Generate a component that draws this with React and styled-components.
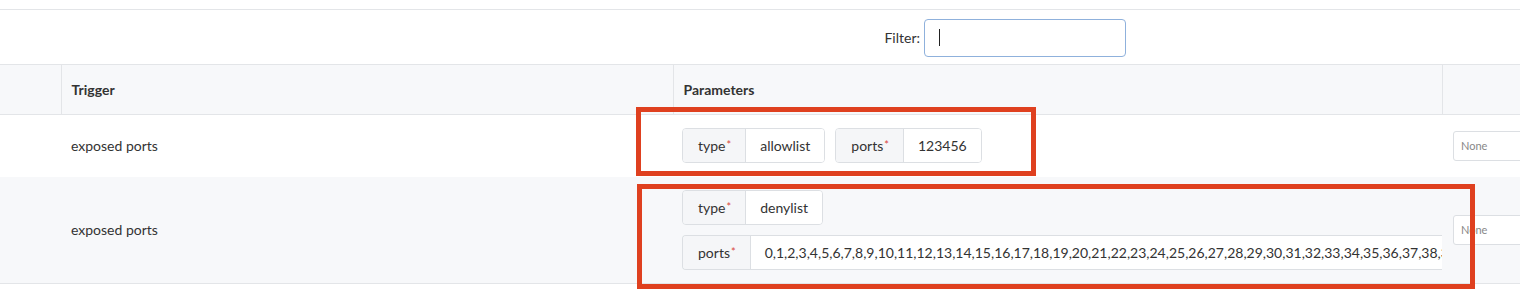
import React from 'react'
import styled, { createGlobalStyle } from 'styled-components'

const GlobalStyle = createGlobalStyle`
  body {
    margin: 0;
    background: #fff;
    font-family: Lato, "Noto Sans", "Liberation Sans", sans-serif;
    color: #333;
  }
`;

const Page = styled.div`
  position: relative;
  width: 1520px;
  height: 296px;
  overflow: hidden;
  background: #fff;
`;

const TopEdge = styled.div`
  height: 9px;
  border-bottom: 1px solid #e3e5e8;
`;

const FilterBar = styled.div`
  height: 54px;
  display: flex;
  align-items: center;
  justify-content: flex-end;
  padding-right: 394px;
  gap: 4px;
  border-bottom: 1px solid #e3e5e8;
  font-size: 14px;
  color: #333;
`;

const FilterInput = styled.div`
  width: 202px;
  height: 38px;
  margin-top: 1px;
  border: 1px solid #8fb1dc;
  border-radius: 4px;
  background: #fff;
  display: flex;
  align-items: center;
  padding-left: 14px;
  box-sizing: border-box;
`;

const Caret = styled.span`
  width: 1px;
  height: 17px;
  background: #222;
`;

const Table = styled.table`
  border-collapse: collapse;
  table-layout: fixed;
  width: 1640px;
`;

const HeadCell = styled.th`
  height: 49px;
  padding: 0 10px;
  background: #f7f8fa;
  text-align: left;
  font-size: 14px;
  font-weight: 700;
  color: #333;
  border-bottom: 1px solid #e3e5e8;
  border-left: ${({ $first }) => ($first ? 'none' : '1px solid #e3e5e8')};
`;

const Row = styled.tr`
  background: ${({ $striped }) => ($striped ? '#f7f8fa' : '#fff')};
  & > td {
    border-bottom: ${({ $last }) => ($last ? '1px solid #e3e5e8' : 'none')};
  }
`;

const Cell = styled.td`
  height: ${({ $h }) => $h}px;
  padding: 0 10px;
  font-size: 14px;
  color: #333;
  vertical-align: middle;
  overflow: hidden;
  box-sizing: border-box;
`;

const ParamCell = styled(Cell)`
  padding: 13px 0 13px 9px;
`;

const Params = styled.div`
  display: flex;
  flex-direction: ${({ $stack }) => ($stack ? 'column' : 'row')};
  align-items: flex-start;
  gap: 10px;
`;

const Chip = styled.div`
  display: inline-flex;
  height: 35px;
  box-sizing: border-box;
  border: 1px solid #dcdfe3;
  border-radius: 4px;
  overflow: hidden;
  font-size: 14px;
  flex-shrink: 0;
  width: ${({ $wide }) => ($wide ? '1000px' : 'auto')};
  border-right: ${({ $wide }) => ($wide ? 'none' : '1px solid #dcdfe3')};
  border-top-right-radius: ${({ $wide }) => ($wide ? '0' : '4px')};
  border-bottom-right-radius: ${({ $wide }) => ($wide ? '0' : '4px')};
`;

const ChipKey = styled.span`
  display: flex;
  align-items: center;
  padding: 0 14px 0 15px;
  background: #f5f6f8;
  border-right: 1px solid #dcdfe3;
  color: #333;
`;

const Required = styled.sup`
  color: #d9473d;
  font-size: 11px;
  margin-left: 1px;
  position: relative;
  top: -1px;
`;

const ChipValue = styled.span`
  display: flex;
  align-items: center;
  padding: 0 14px;
  background: #fff;
  white-space: nowrap;
  flex: ${({ $wide }) => ($wide ? 1 : 'none')};
`;

const SelectBox = styled.div`
  width: 120px;
  height: 30px;
  box-sizing: border-box;
  margin-left: 1px;
  border: 1px solid #dcdfe3;
  border-radius: 3px;
  background: #fff;
  display: flex;
  align-items: center;
  padding-left: 7px;
  font-size: 11px;
  color: #888;
`;

const Highlight = styled.div`
  position: absolute;
  left: ${({ $x }) => $x}px;
  top: ${({ $y }) => $y}px;
  width: ${({ $w }) => $w}px;
  height: ${({ $h }) => $h}px;
  border: 5px solid #df401f;
  box-sizing: border-box;
  pointer-events: none;
`;

const ports = Array.from({ length: 60 }, (_, i) => i).join(',')

const Param = ({ name, value, wide }) => (
  <Chip $wide={wide}>
    <ChipKey>
      {name}
      <Required>*</Required>
    </ChipKey>
    <ChipValue $wide={wide}>{value}</ChipValue>
  </Chip>
)

export default function App() {
  return (
    <Page>
      <GlobalStyle />
      <TopEdge />
      <FilterBar>
        <span>Filter:</span>
        <FilterInput>
          <Caret />
        </FilterInput>
      </FilterBar>
      <Table>
        <colgroup>
          <col style={{ width: 61 }} />
          <col style={{ width: 612 }} />
          <col style={{ width: 769 }} />
          <col style={{ width: 198 }} />
        </colgroup>
        <thead>
          <tr>
            <HeadCell $first />
            <HeadCell>Trigger</HeadCell>
            <HeadCell>Parameters</HeadCell>
            <HeadCell />
          </tr>
        </thead>
        <tbody>
          <Row>
            <Cell $h={62} />
            <Cell $h={62}>exposed ports</Cell>
            <ParamCell $h={62}>
              <Params>
                <Param name="type" value="allowlist" />
                <Param name="ports" value="123456" />
              </Params>
            </ParamCell>
            <Cell $h={62}>
              <SelectBox>None</SelectBox>
            </Cell>
          </Row>
          <Row $striped $last>
            <Cell $h={106} />
            <Cell $h={106}>exposed ports</Cell>
            <ParamCell $h={106}>
              <Params $stack>
                <Param name="type" value="denylist" />
                <Param name="ports" value={ports} wide />
              </Params>
            </ParamCell>
            <Cell $h={106}>
              <SelectBox>None</SelectBox>
            </Cell>
          </Row>
        </tbody>
      </Table>
      <Highlight $x={636} $y={107} $w={400} $h={69} />
      <Highlight $x={637} $y={184} $w={838} $h={105} />
    </Page>
  )
}
